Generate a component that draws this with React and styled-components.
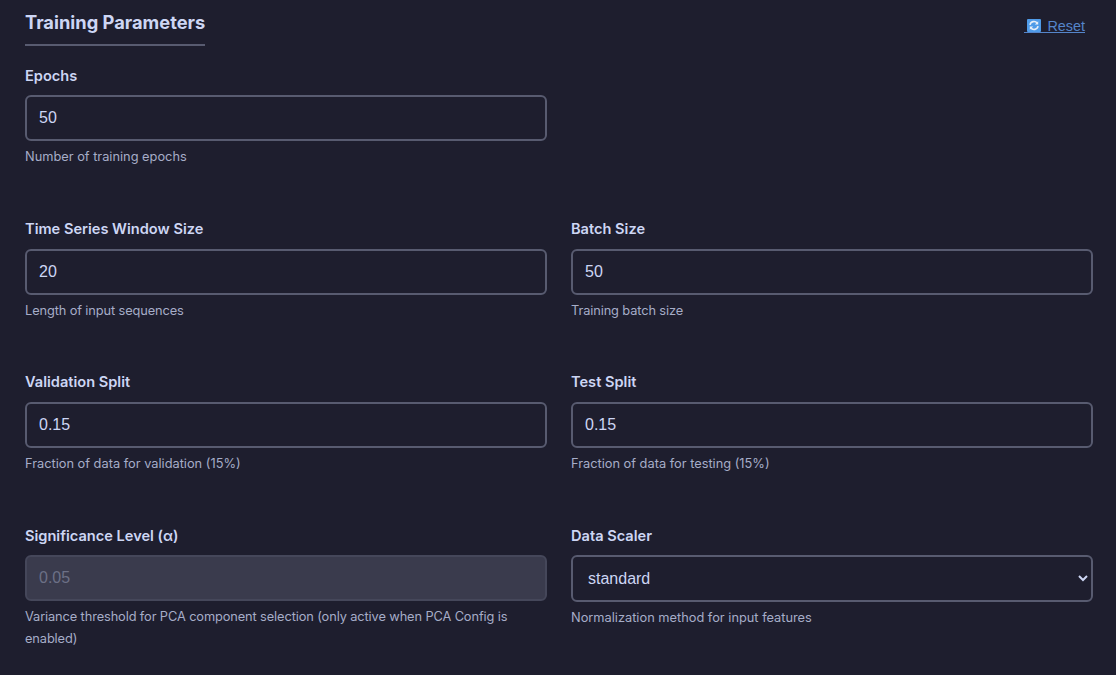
import React from 'react';
import styled, { createGlobalStyle } from 'styled-components';

const GlobalStyle = createGlobalStyle`
    html, body {
        margin: 0;
        padding: 0;
        height: 100%;
        overflow: hidden;
        background: #1e1e2e;
    }
`;

const Page = styled.div`
    box-sizing: border-box;
    width: 1116px;
    height: 675px;
    padding: 0 23px 0 25px;
    background: #1e1e2e;
    font-family: Inter, "Liberation Sans", sans-serif;
    overflow: hidden;
`;

const Header = styled.div`
    display: flex;
    justify-content: space-between;
    align-items: flex-start;
    height: 46px;
    margin-bottom: 20px;
`;

const Title = styled.h2`
    box-sizing: border-box;
    width: 180px;
    height: 46px;
    margin: 0;
    padding-top: 11px;
    border-bottom: 2px solid #585b70;
    color: #cdd6f4;
    font-size: 18.3px;
    font-weight: 700;
    line-height: 22px;
    white-space: nowrap;
`;

const ResetLink = styled.a`
    display: flex;
    align-items: flex-end;
    gap: 6px;
    height: 15px;
    margin: 17px 8px 0 0;
    padding-left: 3px;
    color: #5585ca;
    font-family: "Liberation Sans", Arial, sans-serif;
    font-size: 14.4px;
    line-height: 12px;
    border-bottom: 1px solid #5585ca;
    cursor: pointer;
`;

const Grid = styled.div`
    display: grid;
    grid-template-columns: 522px 522px;
    column-gap: 24px;
`;

const Field = styled.div`
    height: ${props => props.$height}px;
`;

const Label = styled.label`
    display: block;
    height: 20px;
    margin-top: ${props => props.$lift ? '-1px' : '0'};
    margin-bottom: ${props => props.$lift ? '10px' : '9px'};
    color: #cdd6f4;
    font-size: 14.6px;
    font-weight: 600;
    line-height: 20px;
`;

const Input = styled.input`
    display: block;
    box-sizing: border-box;
    width: 100%;
    height: 46px;
    padding: 0 12px;
    background: ${props => props.disabled ? '#3a3b4d' : '#1e1e2e'};
    border: 2px solid ${props => props.disabled ? '#45475a' : '#585b70'};
    border-radius: 6px;
    color: #cdd6f4;
    font-family: "Liberation Sans", Arial, sans-serif;
    font-size: 16px;
    outline: none;

    &:disabled {
        color: #6c7086;
        opacity: 1;
    }
`;

const Select = styled.select`
    display: block;
    box-sizing: border-box;
    width: 100%;
    height: 47px;
    padding: 0 11px;
    background: #1e1e2e;
    border: 2px solid #585b70;
    border-radius: 6px;
    color: #cdd6f4;
    font-family: "Liberation Sans", Arial, sans-serif;
    font-size: 16px;
    outline: none;
`;

const Hint = styled.div`
    margin-top: 5px;
    color: #a6adc8;
    font-size: 12.8px;
    line-height: 21.76px;
    letter-spacing: ${props => props.$tight ? '-0.11px' : 'normal'};
`;

function RefreshIcon() {
    return <svg width="14" height="13" viewBox="0 0 14 13">
        <rect width="14" height="13" rx="1" fill="#4f9be8" />
        <path d="M3 5.8A4 4 0 0 1 10.2 4.2" fill="none" stroke="#e6eef8" strokeWidth="1.6" />
        <path d="M11 7.2A4 4 0 0 1 3.8 8.8" fill="none" stroke="#e6eef8" strokeWidth="1.6" />
        <path d="M11.2 2.2V5.6H7.8zM2.8 10.8V7.4h3.4z" fill="#e6eef8" />
    </svg>;
}

function App() {
    return <Page>
        <GlobalStyle />
        <Header>
            <Title>Training Parameters</Title>
            <ResetLink><RefreshIcon />Reset</ResetLink>
        </Header>
        <Grid>
            <Field $height={154}>
                <Label>Epochs</Label>
                <Input defaultValue="50" />
                <Hint>Number of training epochs</Hint>
            </Field>
            <Field $height={154} />

            <Field $height={153}>
                <Label $lift>Time Series Window Size</Label>
                <Input defaultValue="20" />
                <Hint $tight>Length of input sequences</Hint>
            </Field>
            <Field $height={153}>
                <Label $lift>Batch Size</Label>
                <Input defaultValue="50" />
                <Hint $tight>Training batch size</Hint>
            </Field>

            <Field $height={153}>
                <Label $lift>Validation Split</Label>
                <Input defaultValue="0.15" />
                <Hint>Fraction of data for validation (15%)</Hint>
            </Field>
            <Field $height={153}>
                <Label $lift>Test Split</Label>
                <Input defaultValue="0.15" />
                <Hint>Fraction of data for testing (15%)</Hint>
            </Field>

            <Field $height={120}>
                <Label>Significance Level (α)</Label>
                <Input defaultValue="0.05" disabled />
                <Hint $tight>Variance threshold for PCA component selection (only active when PCA Config is enabled)</Hint>
            </Field>
            <Field $height={120}>
                <Label>Data Scaler</Label>
                <Select defaultValue="standard">
                    <option value="standard">standard</option>
                    <option value="minmax">minmax</option>
                </Select>
                <Hint>Normalization method for input features</Hint>
            </Field>
        </Grid>
    </Page>;
}

export default App;
